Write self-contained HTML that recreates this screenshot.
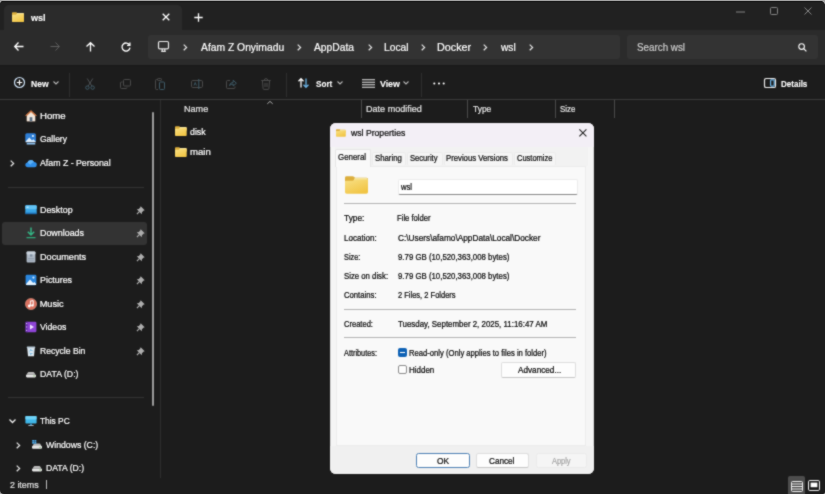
<!DOCTYPE html>
<html><head><meta charset="utf-8">
<style>
*{box-sizing:border-box;margin:0;padding:0}
html,body{width:825px;height:494px;overflow:hidden;background:#a4a4a4;font-family:"Liberation Sans",sans-serif;}
.a{position:absolute}
.t{position:absolute;white-space:nowrap;line-height:1;color:#fff;transform-origin:0 50%}
#win{left:0;top:1px;width:825px;height:493px;background:#1c1c1c;border-radius:4px 5px 2px 4px;overflow:hidden;transform:translateZ(0);will-change:transform;filter:url(#bl)}
#title{left:0;top:0;width:825px;height:30px;background:#212121;border-top:1px solid #171717}
#tab{left:4px;top:3.5px;width:178px;height:26.5px;background:#2b2b2b;border-radius:5px 5px 0 0}
#nav{left:0;top:29px;width:825px;height:35px;background:#2b2b2b}
#addr{left:148px;top:34.4px;width:472px;height:23.2px;background:#333;border-radius:3px}
#srch{left:626.5px;top:34.4px;width:191px;height:23.2px;background:#333;border-radius:3px}
#tool{left:0;top:64px;width:825px;height:35px;background:#1c1c1c;border-top:1px solid #181818}
#hline{left:0;top:98px;width:825px;height:1px;background:#3a3a3a}
.nv{font-size:8.7px;color:#fff}
.bc{font-size:10.2px;color:#fff}
.d{font-size:7.5px;color:#1a1a1a}
.sep{position:absolute;width:1px;background:#3a3a3a}
svg{position:absolute;overflow:visible}
</style></head><body><svg width="0" height="0" style="position:absolute"><defs><filter id="bl" x="0" y="0" width="100%" height="100%" color-interpolation-filters="sRGB"><feConvolveMatrix order="3" kernelMatrix="0.035 0.09 0.035 0.09 0.5 0.09 0.035 0.09 0.035" edgeMode="duplicate" preserveAlpha="true"/></filter><linearGradient id="fg" x1="0" y1="0" x2=".6" y2="1"><stop offset="0" stop-color="#f8e085"/><stop offset="1" stop-color="#f1c545"/></linearGradient></defs></svg>
<div id="win" class="a">
 <div id="title" class="a"></div>
 <div id="tab" class="a"></div>
 <div id="nav" class="a"></div>
 <div id="addr" class="a"></div>
 <div id="srch" class="a"></div>
 <div id="tool" class="a"></div>
 <div id="hline" class="a"></div>

 <!-- TAB CONTENT -->
 <svg style="left:12px;top:10.6px" width="12" height="10.3" viewBox="0 0 12 11" preserveAspectRatio="none"><path d="M0 1Q0 .2 .9 .2H3.9Q4.4 .2 4.7 .5L5.2 1H11.1Q12 1 12 1.9V5H0Z" fill="#dcae3c"/><path d="M5 1.15H11.1Q11.85 1.15 11.85 1.9V4H4.2Z" fill="#f6e49c"/><path d="M0 3.4Q0 2.9 .5 2.9H3.9Q4.4 2.9 4.8 2.5L5.2 2.1H11.1Q12 2.1 12 3V9.9Q12 10.8 11.1 10.8H.9Q0 10.8 0 9.9Z" fill="url(#fg)"/></svg>
 <svg style="left:162px;top:12px" width="8" height="8" viewBox="0 0 8 8"><path d="M.7.7L7.3 7.3M7.3.7L.7 7.3" stroke="#fff" stroke-width="1.3" fill="none"/></svg>
 <svg style="left:194px;top:12px" width="9" height="9" viewBox="0 0 9 9"><path d="M4.5.3V8.7M.3 4.5H8.7" stroke="#fff" stroke-width="1.3" fill="none"/></svg>
 <!-- window controls -->
 <svg style="left:736px;top:9.5px" width="9" height="2" viewBox="0 0 9 2"><path d="M0 1H9" stroke="#858585" stroke-width="1"/></svg>
 <svg style="left:770px;top:6px" width="8" height="8" viewBox="0 0 8 8"><rect x=".5" y=".5" width="7" height="7" rx="1" stroke="#858585" fill="none" stroke-width="1"/></svg>
 <svg style="left:803.5px;top:6px" width="8" height="8" viewBox="0 0 8 8"><path d="M.5.5L7.5 7.5M7.5.5L.5 7.5" stroke="#858585" stroke-width="1" fill="none"/></svg>

 <!-- NAV ROW -->
 <svg style="left:14px;top:41px" width="10" height="9" viewBox="0 0 10 9"><path d="M4.5.5L.7 4.5L4.5 8.5M.7 4.5H9.5" stroke="#fff" stroke-width="1.3" fill="none"/></svg>
 <svg style="left:50px;top:41px" width="10" height="9" viewBox="0 0 10 9"><path d="M5.5.5L9.3 4.5L5.5 8.5M9.3 4.5H.5" stroke="#5e5e5e" stroke-width="1" fill="none"/></svg>
 <svg style="left:85.5px;top:40.5px" width="9" height="10" viewBox="0 0 9 10"><path d="M.5 4.5L4.5.7L8.5 4.5M4.5.7V9.5" stroke="#fff" stroke-width="1.3" fill="none"/></svg>
 <svg style="left:120.5px;top:40.5px" width="10" height="10" viewBox="0 0 10 10"><path d="M8.6 3.2A4 4 0 1 0 9 5.6" stroke="#fff" stroke-width="1.3" fill="none"/><path d="M8.9.6V3.4H6.1" stroke="#fff" stroke-width="1.3" fill="none"/></svg>
 <svg style="left:157.5px;top:39.5px" width="11" height="11" viewBox="0 0 11 11"><rect x=".5" y=".5" width="10" height="7.4" rx="1.3" stroke="#e8e8e8" fill="none" stroke-width="1.2"/><path d="M3.2 10.3H7.8M4.2 8V10.3M6.8 8V10.3" stroke="#e8e8e8" stroke-width="1.2" fill="none"/></svg>
 <svg style="left:797.5px;top:41.5px" width="9" height="9" viewBox="0 0 9 9"><circle cx="3.6" cy="3.6" r="2.8" stroke="#fff" stroke-width="1.1" fill="none"/><path d="M5.7 5.7L8.4 8.4" stroke="#fff" stroke-width="1.2"/></svg>
<svg style="left:183px;top:42.5px" width="4.4" height="6.8" viewBox="0 0 4.4 6.8"><path d="M.7.6L3.6 3.4L.7 6.2" stroke="#e4e4e4" stroke-width="1.25" fill="none"/></svg>
<svg style="left:297px;top:42.5px" width="4.4" height="6.8" viewBox="0 0 4.4 6.8"><path d="M.7.6L3.6 3.4L.7 6.2" stroke="#e4e4e4" stroke-width="1.25" fill="none"/></svg>
<svg style="left:368px;top:42.5px" width="4.4" height="6.8" viewBox="0 0 4.4 6.8"><path d="M.7.6L3.6 3.4L.7 6.2" stroke="#e4e4e4" stroke-width="1.25" fill="none"/></svg>
<svg style="left:420.5px;top:42.5px" width="4.4" height="6.8" viewBox="0 0 4.4 6.8"><path d="M.7.6L3.6 3.4L.7 6.2" stroke="#e4e4e4" stroke-width="1.25" fill="none"/></svg>
<svg style="left:483px;top:42.5px" width="4.4" height="6.8" viewBox="0 0 4.4 6.8"><path d="M.7.6L3.6 3.4L.7 6.2" stroke="#e4e4e4" stroke-width="1.25" fill="none"/></svg>
<svg style="left:529px;top:42.5px" width="4.4" height="6.8" viewBox="0 0 4.4 6.8"><path d="M.7.6L3.6 3.4L.7 6.2" stroke="#e4e4e4" stroke-width="1.25" fill="none"/></svg>

 <!-- TOOLBAR -->
 <svg style="left:13.5px;top:75.5px" width="11" height="11" viewBox="0 0 11 11"><circle cx="5.5" cy="5.5" r="5" stroke="#cfe3f7" stroke-width="1.2" fill="none"/><path d="M5.5 2.8V8.2M2.8 5.5H8.2" stroke="#fff" stroke-width="1.2" fill="none"/></svg>
<svg style="left:53px;top:80px" width="6" height="4" viewBox="0 0 6 4"><path d="M.5.5L3 3L5.5.5" stroke="#b4b4b4" stroke-width="1.1" fill="none"/></svg>
<div class="sep" style="left:69px;top:72px;height:24px;background:#2e2e2e"></div>
<svg style="left:85px;top:76.6px" width="10" height="12" viewBox="0 0 10 12"><path d="M2.2.5L7 8.3M7.8.5L3 8.3" stroke="#4c5053" stroke-width="1" fill="none"/><circle cx="2.4" cy="9.6" r="1.7" stroke="#3e5a67" stroke-width="1" fill="none"/><circle cx="7.6" cy="9.6" r="1.7" stroke="#3e5a67" stroke-width="1" fill="none"/></svg>
<svg style="left:120px;top:77.6px" width="11" height="10" viewBox="0 0 11 10"><rect x="3.5" y=".5" width="7" height="6.5" rx="1" stroke="#4a4a4a" stroke-width="1" fill="none"/><path d="M2.5 3H1.5Q.5 3 .5 4V8.5Q.5 9.5 1.5 9.5H6Q7 9.5 7 8.5" stroke="#4a4a4a" stroke-width="1" fill="none"/></svg>
<svg style="left:155px;top:76.6px" width="10" height="12" viewBox="0 0 10 12"><path d="M3 1.5H1.5Q.5 1.5 .5 2.5V10.5Q.5 11.5 1.5 11.5H3" stroke="#4a4a4a" stroke-width="1" fill="none"/><rect x="2.5" y=".5" width="4" height="2" rx=".7" stroke="#4a4a4a" stroke-width="1" fill="none"/><rect x="4.5" y="4" width="5" height="7.5" rx="1" stroke="#3e5a67" stroke-width="1" fill="none"/></svg>
<svg style="left:190.5px;top:77.6px" width="12" height="10" viewBox="0 0 12 10"><rect x=".5" y="1.5" width="11" height="7" rx="1.3" stroke="#4a4a4a" stroke-width="1" fill="none"/><path d="M7.8 0V10" stroke="#3e5a67" stroke-width="1"/><path d="M3 6.5L4.2 3.5L5.4 6.5" stroke="#3e5a67" stroke-width=".9" fill="none"/></svg>
<svg style="left:226px;top:77.6px" width="11" height="10" viewBox="0 0 11 10"><path d="M4 1.5H1.5Q.5 1.5 .5 2.5V8.5Q.5 9.5 1.5 9.5H8Q9 9.5 9 8.5V7.5" stroke="#4a4a4a" stroke-width="1" fill="none"/><path d="M3.5 6.5Q4 3.6 7.2 3.4V1.2L10.4 4.2L7.2 7V5Q5 5 3.5 6.5Z" stroke="#3e5a67" stroke-width="1" fill="none"/></svg>
<svg style="left:261px;top:76.6px" width="10" height="12" viewBox="0 0 10 12"><path d="M.3 2.5H9.7M3.3 2.3Q3.3.6 5 .6Q6.7.6 6.7 2.3M1.4 2.7L2.1 10.6Q2.2 11.4 3 11.4H7Q7.8 11.4 7.9 10.6L8.6 2.7M4 4.8V9M6 4.8V9" stroke="#4a4a4a" stroke-width="1" fill="none"/></svg>
<div class="sep" style="left:286px;top:72px;height:24px;background:#2e2e2e"></div>
<svg style="left:297.5px;top:77px" width="11" height="10" viewBox="0 0 11 10"><path d="M3 9.5V.8M.5 3.2L3 .7L5.5 3.2" stroke="#fff" stroke-width="1.25" fill="none"/><path d="M8 .5V9.2M5.5 6.8L8 9.3L10.5 6.8" stroke="#6cb4e6" stroke-width="1.25" fill="none"/></svg>
<svg style="left:337px;top:80px" width="6" height="4" viewBox="0 0 6 4"><path d="M.5.5L3 3L5.5.5" stroke="#b4b4b4" stroke-width="1.1" fill="none"/></svg>
<svg style="left:362px;top:78px" width="13" height="9" viewBox="0 0 13 9"><path d="M0 .7H13M0 3.2H13M0 5.7H13M0 8.2H13" stroke="#e6e6e6" stroke-width="1.15" fill="none"/></svg>
<svg style="left:403px;top:80px" width="6" height="4" viewBox="0 0 6 4"><path d="M.5.5L3 3L5.5.5" stroke="#b4b4b4" stroke-width="1.1" fill="none"/></svg>
<div class="sep" style="left:421px;top:72px;height:24px;background:#2e2e2e"></div>
<svg style="left:433px;top:81px" width="12" height="3" viewBox="0 0 12 3"><circle cx="1.3" cy="1.5" r="1.05" fill="#fff"/><circle cx="6" cy="1.5" r="1.05" fill="#fff"/><circle cx="10.7" cy="1.5" r="1.05" fill="#fff"/></svg>
<svg style="left:764px;top:77px" width="12" height="10" viewBox="0 0 12 10"><rect x=".5" y=".5" width="11" height="9" rx="1.6" stroke="#e8e8e8" stroke-width="1.2" fill="none"/><rect x="6.6" y="1.9" width="3.6" height="6.2" rx=".8" stroke="#6cb4e6" stroke-width="1.2" fill="none"/></svg>
<div class="a" style="left:2px;top:220.5px;width:144.5px;height:23.5px;background:#333;border-radius:3px"></div>
<div class="a" style="left:8px;top:186px;width:136px;height:1px;background:#323232"></div>
<div class="a" style="left:8px;top:396px;width:136px;height:1px;background:#323232"></div>
<div class="a" style="left:152.3px;top:111px;width:2px;height:293.5px;background:#9b9b9b;border-radius:1px"></div>
<div class="a" style="left:160px;top:99px;width:1px;height:378px;background:#2e2e2e"></div>
<svg style="left:25px;top:109px" width="12" height="12" viewBox="0 0 12 12"><path d="M6 .6L.6 5.4H1.8V11.2H10.2V5.4H11.4Z" fill="#e8b48c"/><path d="M6 .2L.2 5.6L1 6.3L6 1.8L11 6.3L11.8 5.6Z" fill="#c56b3a"/><rect x="4.6" y="7" width="2.8" height="4.2" fill="#7a8a99"/><path d="M1.8 6.2L6 2.5L10.2 6.2V11.2H1.8Z" fill="#f2efe9" opacity=".85"/><rect x="4.7" y="7.2" width="2.6" height="4" fill="#5b6f82"/></svg>
<svg style="left:25px;top:132px" width="12" height="12" viewBox="0 0 12 12"><rect x=".3" y=".3" width="10.6" height="9" rx="1.5" fill="#2f7fd6"/><path d="M.6 8.6L4.3 4.6L7 7.4L8.3 6.2L10.8 8.8V9.3H.6Z" fill="#dff0ff"/><circle cx="7.9" cy="3" r="1.1" fill="#dff0ff"/><rect x="1.6" y="10" width="8.8" height="1.6" rx=".7" fill="#8fc5f5"/></svg>
<svg style="left:25px;top:156px" width="12" height="12" viewBox="0 0 12 12"><path d="M3 10.2Q.3 10.2 .3 7.8Q.3 5.8 2.4 5.5Q3.2 3 5.9 3Q8.2 3 9 5.1Q11.8 5.2 11.8 7.7Q11.8 10.2 9.4 10.2Z" fill="#2f8ee8"/><path d="M2.4 5.5Q3.2 3 5.9 3Q8.2 3 9 5.1Q6.5 5.5 5.6 7.8Z" fill="#5fb2f5"/></svg>
<svg style="left:25px;top:203px" width="12" height="12" viewBox="0 0 12 12"><rect x=".3" y="1.2" width="11.4" height="8.6" rx="1" fill="#38a5e6"/><rect x=".3" y="1.2" width="11.4" height="4" rx="1" fill="#62c3f5"/><rect x=".3" y="8.6" width="11.4" height="1.6" fill="#1d6fb3"/><rect x="1.6" y="2.6" width="2" height="1.2" fill="#c9ecff"/></svg><svg style="left:135.8px;top:205.1px" width="9" height="9" viewBox="0 0 9 9"><path d="M4.7.3L8.7 4.3L7.4 4.8L6 6.2L5.7 8.2L.8 3.3L2.8 3L4.2 1.6Z" fill="#adadad"/><path d="M3.3 5.7L.9 8.1" stroke="#adadad" stroke-width="1.2"/></svg>
<svg style="left:25px;top:226px" width="12" height="12" viewBox="0 0 12 12"><path d="M6 .6V7.8M2.8 4.8L6 8L9.2 4.8" stroke="#34b384" stroke-width="1.5" fill="none"/><path d="M1.5 10.6H10.5" stroke="#2ea779" stroke-width="1.4"/></svg><svg style="left:135.8px;top:228.1px" width="9" height="9" viewBox="0 0 9 9"><path d="M4.7.3L8.7 4.3L7.4 4.8L6 6.2L5.7 8.2L.8 3.3L2.8 3L4.2 1.6Z" fill="#adadad"/><path d="M3.3 5.7L.9 8.1" stroke="#adadad" stroke-width="1.2"/></svg>
<svg style="left:25px;top:250px" width="12" height="12" viewBox="0 0 12 12"><rect x="1.6" y=".4" width="8.8" height="11.2" rx="1" fill="#aeb9c6"/><rect x="1.6" y=".4" width="8.8" height="3" rx="1" fill="#c9d2dc"/><rect x="5" y="3.4" width="2.4" height="2.2" fill="#7e8ea0"/><rect x="3" y="7" width="6" height=".8" fill="#8d9aaa"/><rect x="3" y="8.8" width="6" height=".8" fill="#8d9aaa"/></svg><svg style="left:135.8px;top:252.1px" width="9" height="9" viewBox="0 0 9 9"><path d="M4.7.3L8.7 4.3L7.4 4.8L6 6.2L5.7 8.2L.8 3.3L2.8 3L4.2 1.6Z" fill="#adadad"/><path d="M3.3 5.7L.9 8.1" stroke="#adadad" stroke-width="1.2"/></svg>
<svg style="left:25px;top:273px" width="12" height="12" viewBox="0 0 12 12"><rect x=".6" y=".8" width="10.8" height="10.4" rx="1.4" fill="#2b86dc"/><path d="M.9 10.3L5 5.6L8.2 9L9.3 7.9L11.1 9.9V10.5Q11.1 11 10.4 11H1.6Q.9 11 .9 10.3Z" fill="#e6f3ff"/><circle cx="8.4" cy="3.6" r="1.1" fill="#cfe8ff"/></svg><svg style="left:135.8px;top:275.1px" width="9" height="9" viewBox="0 0 9 9"><path d="M4.7.3L8.7 4.3L7.4 4.8L6 6.2L5.7 8.2L.8 3.3L2.8 3L4.2 1.6Z" fill="#adadad"/><path d="M3.3 5.7L.9 8.1" stroke="#adadad" stroke-width="1.2"/></svg>
<svg style="left:25px;top:296.5px" width="12" height="12" viewBox="0 0 12 12"><circle cx="6" cy="6" r="5.6" fill="#d9705f"/><circle cx="6" cy="6" r="5.6" fill="none" stroke="#e8937f" stroke-width=".6"/><path d="M5 3.2L8.2 2.6V7.4" stroke="#fff" stroke-width="1" fill="none"/><circle cx="4.3" cy="8" r="1.4" fill="#fff"/><circle cx="7.4" cy="7.4" r="1.2" fill="#fff"/><path d="M5.4 3.2V8" stroke="#fff" stroke-width=".9"/></svg><svg style="left:135.8px;top:298.6px" width="9" height="9" viewBox="0 0 9 9"><path d="M4.7.3L8.7 4.3L7.4 4.8L6 6.2L5.7 8.2L.8 3.3L2.8 3L4.2 1.6Z" fill="#adadad"/><path d="M3.3 5.7L.9 8.1" stroke="#adadad" stroke-width="1.2"/></svg>
<svg style="left:25px;top:320px" width="12" height="12" viewBox="0 0 12 12"><rect x=".6" y=".8" width="10.8" height="10.4" rx="1.2" fill="#8e44d6"/><rect x=".6" y=".8" width="2.2" height="10.4" fill="#6a2fb0"/><path d="M5 3.6L9 6L5 8.4Z" fill="#f0e2ff"/><rect x="1.1" y="2" width="1.1" height="1.1" fill="#d9c2f5"/><rect x="1.1" y="5.4" width="1.1" height="1.1" fill="#d9c2f5"/><rect x="1.1" y="8.8" width="1.1" height="1.1" fill="#d9c2f5"/></svg><svg style="left:135.8px;top:322.1px" width="9" height="9" viewBox="0 0 9 9"><path d="M4.7.3L8.7 4.3L7.4 4.8L6 6.2L5.7 8.2L.8 3.3L2.8 3L4.2 1.6Z" fill="#adadad"/><path d="M3.3 5.7L.9 8.1" stroke="#adadad" stroke-width="1.2"/></svg>
<svg style="left:25px;top:344px" width="12" height="12" viewBox="0 0 12 12"><path d="M2.2 2.8H9.8L9 11.2H3Z" fill="#dfe9f0"/><rect x="1.8" y="1.6" width="8.4" height="1.6" rx=".5" fill="#b8c9d6"/><path d="M4.4 6.2L6 4.6L7.6 6.2M7.4 8L6 9.4L4.6 8" stroke="#3f9fd8" stroke-width=".9" fill="none"/></svg><svg style="left:135.8px;top:346.1px" width="9" height="9" viewBox="0 0 9 9"><path d="M4.7.3L8.7 4.3L7.4 4.8L6 6.2L5.7 8.2L.8 3.3L2.8 3L4.2 1.6Z" fill="#adadad"/><path d="M3.3 5.7L.9 8.1" stroke="#adadad" stroke-width="1.2"/></svg>
<svg style="left:25px;top:367px" width="12" height="12" viewBox="0 0 12 12"><path d="M1.6 6.6L2.8 4.4Q3 4 3.6 4H8.4Q9 4 9.2 4.4L10.4 6.6Z" fill="#b8b8b8"/><rect x="1" y="6.4" width="10" height="3" rx="1.1" fill="#e6e6e6"/><rect x="8.3" y="7.5" width="1.6" height=".8" fill="#7fbf6a"/></svg>
<svg style="left:10px;top:158.5px" width="4.4" height="6.8" viewBox="0 0 4.4 6.8"><path d="M.7.6L3.6 3.4L.7 6.2" stroke="#e0e0e0" stroke-width="1.3" fill="none"/></svg>
<svg style="left:8.5px;top:418px" width="7" height="4" viewBox="0 0 7 4"><path d="M.5.5L3.5 3.5L6.5.5" stroke="#ececec" stroke-width="1.3" fill="none"/></svg>
<svg style="left:25px;top:414px" width="12" height="12" viewBox="0 0 12 12"><rect x=".4" y="1" width="11.2" height="7.6" rx=".8" fill="#3fb6e8"/><rect x=".4" y="1" width="11.2" height="3.6" rx=".8" fill="#6ed2f7"/><rect x="5" y="8.6" width="2" height="1.4" fill="#2a84b8"/><rect x="3.2" y="10" width="5.6" height="1" rx=".4" fill="#9fb4c2"/></svg>
<svg style="left:16px;top:440.5px" width="4.4" height="6.8" viewBox="0 0 4.4 6.8"><path d="M.7.6L3.6 3.4L.7 6.2" stroke="#e0e0e0" stroke-width="1.3" fill="none"/></svg>
<svg style="left:31px;top:437.5px" width="12" height="12" viewBox="0 0 12 12"><path d="M1.6 7L2.8 4.8Q3 4.4 3.6 4.4H8.4Q9 4.4 9.2 4.8L10.4 7Z" fill="#b8b8b8"/><rect x="1" y="6.8" width="10" height="3" rx="1.1" fill="#e6e6e6"/><rect x="8.3" y="7.9" width="1.6" height=".8" fill="#7fbf6a"/><rect x="1.2" y="1" width="1.9" height="1.7" fill="#4aa8e8"/><rect x="3.4" y="1" width="1.9" height="1.7" fill="#4aa8e8"/><rect x="1.2" y="3" width="1.9" height="1.7" fill="#4aa8e8"/><rect x="3.4" y="3" width="1.9" height="1.7" fill="#4aa8e8"/></svg>
<svg style="left:16px;top:464px" width="4.4" height="6.8" viewBox="0 0 4.4 6.8"><path d="M.7.6L3.6 3.4L.7 6.2" stroke="#e0e0e0" stroke-width="1.3" fill="none"/></svg>
<svg style="left:31px;top:461px" width="12" height="12" viewBox="0 0 12 12"><path d="M1.6 6.6L2.8 4.4Q3 4 3.6 4H8.4Q9 4 9.2 4.4L10.4 6.6Z" fill="#b8b8b8"/><rect x="1" y="6.4" width="10" height="3" rx="1.1" fill="#e6e6e6"/><rect x="8.3" y="7.5" width="1.6" height=".8" fill="#7fbf6a"/></svg>
<div class="a" style="left:46px;top:478.5px;width:1px;height:9.5px;background:#bdbdbd"></div>
<div class="a" style="left:787.5px;top:475px;width:17.5px;height:18px;background:#4d4d4d;border-radius:2px 2px 0 0"></div>
<svg style="left:790.5px;top:479.5px" width="12" height="11" viewBox="0 0 12 11"><rect x=".5" y=".5" width="11" height="10" rx="1" stroke="#eee" fill="none"/><path d="M1 3H11M1 5.5H11M1 8H11" stroke="#eee" stroke-width="1"/></svg>
<svg style="left:807.5px;top:478.5px" width="12" height="11" viewBox="0 0 12 11"><rect x=".5" y=".5" width="11" height="10" rx="1.3" stroke="#eee" fill="none"/><rect x="2.6" y="2.6" width="6.8" height="4.6" fill="#fff"/></svg>
<svg style="left:267px;top:99.5px" width="6" height="3" viewBox="0 0 6 3"><path d="M.3 2.8L3 .4L5.7 2.8" stroke="#bbb" stroke-width=".9" fill="none"/></svg>
<div class="sep" style="left:361px;top:99px;height:18px;background:#4a4a4a"></div>
<div class="sep" style="left:467px;top:99px;height:18px;background:#4a4a4a"></div>
<div class="sep" style="left:555px;top:99px;height:18px;background:#4a4a4a"></div>
<div class="sep" style="left:614px;top:99px;height:18px;background:#4a4a4a"></div>
<svg style="left:175.2px;top:125.4px" width="11.7" height="10.2" viewBox="0 0 12 11" preserveAspectRatio="none"><path d="M0 1Q0 .2 .9 .2H3.9Q4.4 .2 4.7 .5L5.2 1H11.1Q12 1 12 1.9V5H0Z" fill="#dcae3c"/><path d="M5 1.15H11.1Q11.85 1.15 11.85 1.9V4H4.2Z" fill="#f6e49c"/><path d="M0 3.4Q0 2.9 .5 2.9H3.9Q4.4 2.9 4.8 2.5L5.2 2.1H11.1Q12 2.1 12 3V9.9Q12 10.8 11.1 10.8H.9Q0 10.8 0 9.9Z" fill="url(#fg)"/></svg>
<svg style="left:175.2px;top:146.4px" width="11.7" height="10.2" viewBox="0 0 12 11" preserveAspectRatio="none"><path d="M0 1Q0 .2 .9 .2H3.9Q4.4 .2 4.7 .5L5.2 1H11.1Q12 1 12 1.9V5H0Z" fill="#dcae3c"/><path d="M5 1.15H11.1Q11.85 1.15 11.85 1.9V4H4.2Z" fill="#f6e49c"/><path d="M0 3.4Q0 2.9 .5 2.9H3.9Q4.4 2.9 4.8 2.5L5.2 2.1H11.1Q12 2.1 12 3V9.9Q12 10.8 11.1 10.8H.9Q0 10.8 0 9.9Z" fill="url(#fg)"/></svg>
<div class="t" style="left:31.00px;top:12.00px;font-size:9.6px;color:#fff;transform:scaleX(0.9459);font-weight:bold;-webkit-text-stroke:.1px #fff">wsl</div>
<div class="t" style="left:201.00px;top:41.00px;font-size:10.9px;color:#fff;transform:scaleX(0.9472);-webkit-text-stroke:.2px #fff">Afam Z Onyimadu</div>
<div class="t" style="left:314.00px;top:41.00px;font-size:10.9px;color:#fff;transform:scaleX(0.9434);-webkit-text-stroke:.2px #fff">AppData</div>
<div class="t" style="left:384.15px;top:41.00px;font-size:10.9px;color:#fff;transform:scaleX(0.9426);-webkit-text-stroke:.2px #fff">Local</div>
<div class="t" style="left:437.11px;top:41.00px;font-size:10.9px;color:#fff;transform:scaleX(0.9880);-webkit-text-stroke:.2px #fff">Docker</div>
<div class="t" style="left:501.00px;top:41.00px;font-size:10.9px;color:#fff;transform:scaleX(0.9333);-webkit-text-stroke:.2px #fff">wsl</div>
<div class="t" style="left:636.55px;top:41.00px;font-size:10.9px;color:#cdcdcd;transform:scaleX(0.9021);-webkit-text-stroke:.2px #cdcdcd">Search wsl</div>
<div class="t" style="left:30.62px;top:79.00px;font-size:8.9px;color:#fff;transform:scaleX(0.9661);font-weight:bold;-webkit-text-stroke:.1px #fff">New</div>
<div class="t" style="left:315.72px;top:79.00px;font-size:8.9px;color:#fff;transform:scaleX(0.9195);font-weight:bold;-webkit-text-stroke:.1px #fff">Sort</div>
<div class="t" style="left:379.90px;top:79.00px;font-size:8.9px;color:#fff;transform:scaleX(1.0000);font-weight:bold;-webkit-text-stroke:.1px #fff">View</div>
<div class="t" style="left:781.46px;top:79.00px;font-size:8.9px;color:#fff;transform:scaleX(0.9043);font-weight:bold;-webkit-text-stroke:.1px #fff">Details</div>
<div class="t" style="left:183.71px;top:104.00px;font-size:9.2px;color:#e6e6e6;transform:scaleX(0.9871);-webkit-text-stroke:.2px #e6e6e6">Name</div>
<div class="t" style="left:365.71px;top:104.00px;font-size:9.2px;color:#e6e6e6;transform:scaleX(0.9856);-webkit-text-stroke:.2px #e6e6e6">Date modified</div>
<div class="t" style="left:472.62px;top:104.00px;font-size:9.2px;color:#e6e6e6;transform:scaleX(0.9171);-webkit-text-stroke:.2px #e6e6e6">Type</div>
<div class="t" style="left:559.86px;top:104.00px;font-size:9.2px;color:#e6e6e6;transform:scaleX(0.8538);-webkit-text-stroke:.2px #e6e6e6">Size</div>
<div class="t" style="left:190.12px;top:127.00px;font-size:9.2px;color:#fff;transform:scaleX(0.9560);-webkit-text-stroke:.2px #fff">disk</div>
<div class="t" style="left:189.87px;top:147.00px;font-size:9.2px;color:#fff;transform:scaleX(1.0428);-webkit-text-stroke:.2px #fff">main</div>
<div class="t" style="left:40.07px;top:111.00px;font-size:9.2px;color:#fff;transform:scaleX(1.0429);-webkit-text-stroke:.2px #fff">Home</div>
<div class="t" style="left:40.04px;top:134.00px;font-size:9.2px;color:#fff;transform:scaleX(0.9266);-webkit-text-stroke:.2px #fff">Gallery</div>
<div class="t" style="left:40.40px;top:158.00px;font-size:9.2px;color:#fff;transform:scaleX(0.9537);-webkit-text-stroke:.2px #fff">Afam Z - Personal</div>
<div class="t" style="left:39.73px;top:205.00px;font-size:9.2px;color:#fff;transform:scaleX(0.9663);-webkit-text-stroke:.2px #fff">Desktop</div>
<div class="t" style="left:39.73px;top:228.00px;font-size:9.2px;color:#fff;transform:scaleX(0.9685);-webkit-text-stroke:.2px #fff">Downloads</div>
<div class="t" style="left:39.71px;top:252.00px;font-size:9.2px;color:#fff;transform:scaleX(0.9912);-webkit-text-stroke:.2px #fff">Documents</div>
<div class="t" style="left:39.73px;top:275.00px;font-size:9.2px;color:#fff;transform:scaleX(0.9657);-webkit-text-stroke:.2px #fff">Pictures</div>
<div class="t" style="left:39.70px;top:299.00px;font-size:9.2px;color:#fff;transform:scaleX(1.0000);-webkit-text-stroke:.2px #fff">Music</div>
<div class="t" style="left:40.41px;top:322.00px;font-size:9.2px;color:#fff;transform:scaleX(0.9418);-webkit-text-stroke:.2px #fff">Videos</div>
<div class="t" style="left:39.75px;top:346.00px;font-size:9.2px;color:#fff;transform:scaleX(0.9343);-webkit-text-stroke:.2px #fff">Recycle Bin</div>
<div class="t" style="left:39.74px;top:369.00px;font-size:9.2px;color:#fff;transform:scaleX(0.9515);-webkit-text-stroke:.2px #fff">DATA (D:)</div>
<div class="t" style="left:40.42px;top:416.00px;font-size:9.2px;color:#fff;transform:scaleX(0.9097);-webkit-text-stroke:.2px #fff">This PC</div>
<div class="t" style="left:46.41px;top:440.00px;font-size:9.2px;color:#fff;transform:scaleX(0.9468);-webkit-text-stroke:.2px #fff">Windows (C:)</div>
<div class="t" style="left:45.75px;top:463.00px;font-size:9.2px;color:#fff;transform:scaleX(0.9388);-webkit-text-stroke:.2px #fff">DATA (D:)</div>
<div class="t" style="left:9.72px;top:480.00px;font-size:9.2px;color:#e2e2e2;transform:scaleX(0.9653);-webkit-text-stroke:.2px #e2e2e2">2 items</div>
<div class="a" id="dlg" style="left:329.5px;top:121.5px;width:264.5px;height:351.5px;background:#f5f5f5;border-radius:6px;overflow:hidden;box-shadow:inset 0 0 0 .6px #cfcfcf"><div class="a" style="left:0;top:323.2px;width:264.5px;height:28.3px;background:#f0f0f0"></div><div class="a" style="left:5.5px;top:24px;width:253px;height:19px;background:#f2f2f2"></div>
<div class="a" style="left:0;top:0;width:264.5px;height:24px;background:#f3eff6"></div>
<div class="a" style="left:6.0px;top:43.0px;width:250.5px;height:280.0px;background:#f9f9f9;border:1px solid #ececec"></div>
<div class="a" style="left:5px;top:26.5px;width:36.5px;height:17.5px;background:#f9f9f9;border:1px solid #e6e6e6;border-bottom:none;border-radius:2px 2px 0 0"></div>
<div class="a" style="left:42.5px;top:29.2px;width:33.5px;height:13.8px;background:#f5f5f5;border:1px solid #ececec;border-bottom:none;border-radius:2px 2px 0 0"></div>
<div class="a" style="left:77.0px;top:29.2px;width:36px;height:13.8px;background:#f5f5f5;border:1px solid #ececec;border-bottom:none;border-radius:2px 2px 0 0"></div>
<div class="a" style="left:114.0px;top:29.2px;width:69px;height:13.8px;background:#f5f5f5;border:1px solid #ececec;border-bottom:none;border-radius:2px 2px 0 0"></div>
<div class="a" style="left:184.0px;top:29.2px;width:42px;height:13.8px;background:#f5f5f5;border:1px solid #ececec;border-bottom:none;border-radius:2px 2px 0 0"></div>
<svg style="left:6.4px;top:6.3px" width="9.8" height="7.9" viewBox="0 0 12 11" preserveAspectRatio="none"><path d="M0 1Q0 .2 .9 .2H3.9Q4.4 .2 4.7 .5L5.2 1H11.1Q12 1 12 1.9V5H0Z" fill="#dcae3c"/><path d="M5 1.15H11.1Q11.85 1.15 11.85 1.9V4H4.2Z" fill="#f6e49c"/><path d="M0 3.4Q0 2.9 .5 2.9H3.9Q4.4 2.9 4.8 2.5L5.2 2.1H11.1Q12 2.1 12 3V9.9Q12 10.8 11.1 10.8H.9Q0 10.8 0 9.9Z" fill="url(#fg)"/></svg>
<svg style="left:249.3px;top:6.4px" width="7.8" height="7.8" viewBox="0 0 8 8"><path d="M.4.4L7.6 7.6M7.6.4L.4 7.6" stroke="#262626" stroke-width="1.15" fill="none"/></svg>
<svg style="left:15px;top:53.5px" width="23" height="18" viewBox="0 0 12 11" preserveAspectRatio="none"><path d="M0 1Q0 .2 .9 .2H3.9Q4.4 .2 4.7 .5L5.2 1H11.1Q12 1 12 1.9V5H0Z" fill="#dcae3c"/><path d="M5 1.15H11.1Q11.85 1.15 11.85 1.9V4H4.2Z" fill="#f6e49c"/><path d="M0 3.4Q0 2.9 .5 2.9H3.9Q4.4 2.9 4.8 2.5L5.2 2.1H11.1Q12 2.1 12 3V9.9Q12 10.8 11.1 10.8H.9Q0 10.8 0 9.9Z" fill="url(#fg)"/></svg>
<div class="a" style="left:68.6px;top:56.6px;width:180px;height:16.4px;background:#fff;border:1px solid #ececec;border-bottom:1px solid #8a8a8a;border-radius:2px"></div>
<div class="a" style="left:14.5px;top:80.7px;width:232px;height:1px;background:#b4b4b4"></div>
<div class="a" style="left:14.5px;top:186.0px;width:232px;height:1px;background:#b4b4b4"></div>
<div class="a" style="left:14.5px;top:214.7px;width:232px;height:1px;background:#b4b4b4"></div>
<div class="a" style="left:68.5px;top:225.5px;width:9px;height:9px;background:#0f62b5;border-radius:2px"></div>
<div class="a" style="left:70.7px;top:229.5px;width:4.6px;height:1px;background:#fff"></div>
<div class="a" style="left:68.5px;top:242.8px;width:9px;height:9px;background:#fdfdfd;border:1px solid #8c8c8c;border-radius:2px"></div>
<div class="a" style="left:171.6px;top:239.9px;width:75.4px;height:15.5px;background:#fdfdfd;border:1px solid #dedede;border-bottom-color:#c6c6c6;border-radius:2px"></div>
<div class="a" style="left:86.5px;top:330.5px;width:53.6px;height:15px;background:#fdfdfd;border:1px solid #4f82b5;border-radius:2.5px"></div>
<div class="a" style="left:146.5px;top:330.5px;width:52.6px;height:15px;background:#fdfdfd;border:1px solid #dedede;border-bottom-color:#c6c6c6;border-radius:2.5px"></div>
<div class="a" style="left:206.1px;top:330.5px;width:51.5px;height:15px;background:#f5f5f5;border:1px solid #ebebeb;border-radius:2.5px"></div>
<div class="t" style="left:21.50px;top:6.50px;font-size:9.0px;color:#0c0c0c;transform:scaleX(0.9609);-webkit-text-stroke:.24px #0c0c0c">wsl Properties</div>
<div class="t" style="left:8.94px;top:30.50px;font-size:8.8px;color:#0c0c0c;transform:scaleX(0.8977);-webkit-text-stroke:.24px #0c0c0c">General</div>
<div class="t" style="left:45.15px;top:31.50px;font-size:8.8px;color:#0c0c0c;transform:scaleX(0.8844);-webkit-text-stroke:.24px #0c0c0c">Sharing</div>
<div class="t" style="left:80.85px;top:31.50px;font-size:8.8px;color:#0c0c0c;transform:scaleX(0.8658);-webkit-text-stroke:.24px #0c0c0c">Security</div>
<div class="t" style="left:116.88px;top:31.50px;font-size:8.8px;color:#0c0c0c;transform:scaleX(0.8790);-webkit-text-stroke:.24px #0c0c0c">Previous Versions</div>
<div class="t" style="left:187.16px;top:31.50px;font-size:8.8px;color:#0c0c0c;transform:scaleX(0.8529);-webkit-text-stroke:.24px #0c0c0c">Customize</div>
<div class="t" style="left:71.00px;top:60.50px;font-size:8.8px;color:#0c0c0c;transform:scaleX(0.8678);-webkit-text-stroke:.24px #0c0c0c">wsl</div>
<div class="t" style="left:14.91px;top:91.50px;font-size:8.8px;color:#0c0c0c;transform:scaleX(0.9463);-webkit-text-stroke:.24px #0c0c0c">Type:</div>
<div class="t" style="left:67.79px;top:91.50px;font-size:8.8px;color:#0c0c0c;transform:scaleX(0.8704);-webkit-text-stroke:.24px #0c0c0c">File folder</div>
<div class="t" style="left:14.46px;top:111.50px;font-size:8.8px;color:#0c0c0c;transform:scaleX(0.9181);-webkit-text-stroke:.24px #0c0c0c">Location:</div>
<div class="t" style="left:68.02px;top:111.50px;font-size:8.8px;color:#0c0c0c;transform:scaleX(0.9398);-webkit-text-stroke:.24px #0c0c0c">C:\Users\afamo\AppData\Local\Docker</div>
<div class="t" style="left:14.67px;top:130.50px;font-size:8.8px;color:#0c0c0c;transform:scaleX(0.8315);-webkit-text-stroke:.24px #0c0c0c">Size:</div>
<div class="t" style="left:68.24px;top:130.50px;font-size:8.8px;color:#0c0c0c;transform:scaleX(0.8898);-webkit-text-stroke:.24px #0c0c0c">9.79 GB (10,520,363,008 bytes)</div>
<div class="t" style="left:14.65px;top:149.50px;font-size:8.8px;color:#0c0c0c;transform:scaleX(0.8830);-webkit-text-stroke:.24px #0c0c0c">Size on disk:</div>
<div class="t" style="left:68.24px;top:149.50px;font-size:8.8px;color:#0c0c0c;transform:scaleX(0.8898);-webkit-text-stroke:.24px #0c0c0c">9.79 GB (10,520,363,008 bytes)</div>
<div class="t" style="left:14.65px;top:168.50px;font-size:8.8px;color:#0c0c0c;transform:scaleX(0.8750);-webkit-text-stroke:.24px #0c0c0c">Contains:</div>
<div class="t" style="left:68.26px;top:168.50px;font-size:8.8px;color:#0c0c0c;transform:scaleX(0.8533);-webkit-text-stroke:.24px #0c0c0c">2 Files, 2 Folders</div>
<div class="t" style="left:14.66px;top:197.50px;font-size:8.8px;color:#0c0c0c;transform:scaleX(0.8585);-webkit-text-stroke:.24px #0c0c0c">Created:</div>
<div class="t" style="left:68.82px;top:197.50px;font-size:8.8px;color:#0c0c0c;transform:scaleX(0.8989);-webkit-text-stroke:.24px #0c0c0c">Tuesday, September 2, 2025, 11:16:47 AM</div>
<div class="t" style="left:14.92px;top:226.50px;font-size:8.8px;color:#0c0c0c;transform:scaleX(0.8320);-webkit-text-stroke:.24px #0c0c0c">Attributes:</div>
<div class="t" style="left:79.79px;top:226.50px;font-size:8.8px;color:#0c0c0c;transform:scaleX(0.8690);-webkit-text-stroke:.24px #0c0c0c">Read-only (Only applies to files in folder)</div>
<div class="t" style="left:79.77px;top:243.50px;font-size:8.8px;color:#0c0c0c;transform:scaleX(0.9060);-webkit-text-stroke:.24px #0c0c0c">Hidden</div>
<div class="t" style="left:188.01px;top:243.50px;font-size:8.8px;color:#0c0c0c;transform:scaleX(0.9298);-webkit-text-stroke:.24px #0c0c0c">Advanced...</div>
<div class="t" style="left:107.12px;top:334.50px;font-size:8.8px;color:#0c0c0c;transform:scaleX(0.9508);-webkit-text-stroke:.24px #0c0c0c">OK</div>
<div class="t" style="left:159.93px;top:334.50px;font-size:8.8px;color:#0c0c0c;transform:scaleX(0.9280);-webkit-text-stroke:.24px #0c0c0c">Cancel</div>
<div class="t" style="left:222.42px;top:334.50px;font-size:8.8px;color:#a6a6a6;transform:scaleX(0.8447);-webkit-text-stroke:.24px #a6a6a6">Apply</div>
</div>
</div>
</body></html>
